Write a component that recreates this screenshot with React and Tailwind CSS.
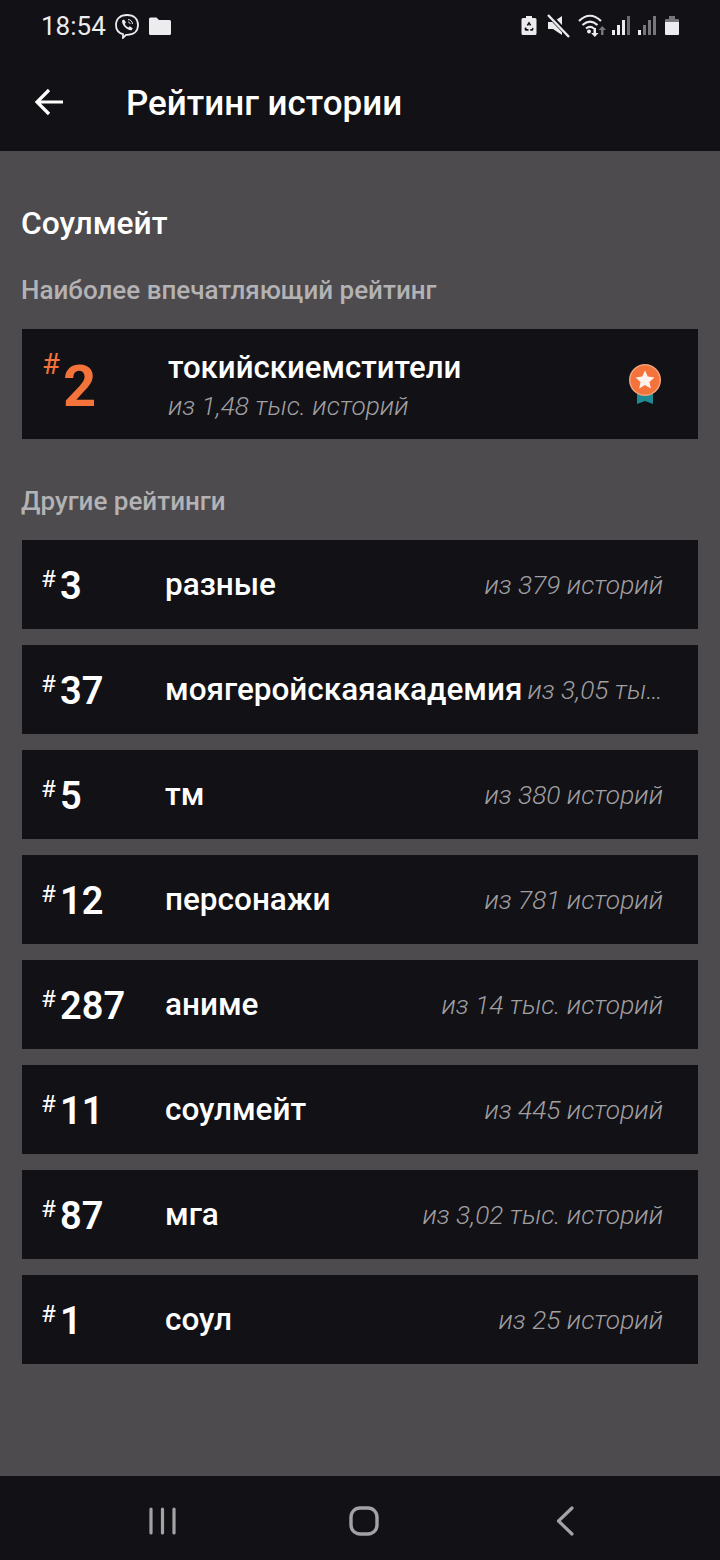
const rows = [
  { rank: "3", tag: "разные", total: "из 379 историй" },
  { rank: "37", tag: "моягеройскаяакадемия", total: "из 3,05 тыс. историй" },
  { rank: "5", tag: "тм", total: "из 380 историй" },
  { rank: "12", tag: "персонажи", total: "из 781 историй" },
  { rank: "287", tag: "аниме", total: "из 14 тыс. историй" },
  { rank: "11", tag: "соулмейт", total: "из 445 историй" },
  { rank: "87", tag: "мга", total: "из 3,02 тыс. историй" },
  { rank: "1", tag: "соул", total: "из 25 историй" },
];

function StatusIcons() {
  return (
    <div className="flex items-center">
      {/* battery saver */}
      <svg width="16" height="22" viewBox="0 0 16 22">
        <path d="M5 1h6v2h3a1.500 1.500 0 0 1 1.500 1.500v14A1.500 1.500 0 0 1 14 20H2a1.500 1.500 0 0 1-1.500-1.500v-14A1.500 1.500 0 0 1 2 3h3z" fill="#ececee" />
        <path d="M8 6.500l2.300 3.500-1.500.8L8 9.300l-.9 1.600-1.400-.8zM3.500 13l1.400-.8 1 1.700h1.600v1.800H4.800a1.200 1.200 0 0 1-1-1.800zM12.500 13l-.2 1.300a1.200 1.200 0 0 1-1.100 1.400H9.300V14h1.500l.6-1.200z" fill="#121115" />
      </svg>
      {/* mute */}
      <svg width="24" height="24" viewBox="0 0 24 24" className="ml-[10px]">
        <path d="M1 8h5l9-6v19l-9-6H1z" fill="#ececee" />
        <path d="M1 0l22 23" stroke="#121115" strokeWidth="5" />
        <path d="M1 1l21 22" stroke="#ececee" strokeWidth="2.400" />
      </svg>
      {/* wifi */}
      <svg width="30" height="24" viewBox="0 0 30 24" className="ml-[7px]">
        <path d="M1 7c7-7 15-7 22 0M4.500 11c5-4.500 10-4.500 15 0M8 14.500c3-2.500 5-2.500 8 0" fill="none" stroke="#ececee" strokeWidth="2.200" />
        <circle cx="11" cy="17.500" r="2" fill="#ececee" />
        <path d="M15.500 14h2.500v5h2.500l-3.700 4-3.700-4h2.400z" fill="#ececee" />
        <path d="M23 21h2.500v-5H28l-3.700-4-3.700 4H23z" fill="#77767a" />
      </svg>
      {/* signal 1 */}
      <svg width="20" height="22" viewBox="0 0 20 22" className="ml-[3px]">
        <rect x="1" y="15" width="3" height="5" fill="#ececee" />
        <rect x="6" y="10" width="3" height="10" fill="#ececee" />
        <rect x="11" y="5" width="3" height="15" fill="#ececee" />
        <rect x="16" y="1" width="3" height="19" fill="#6b6a6e" />
      </svg>
      {/* signal 2 */}
      <svg width="20" height="22" viewBox="0 0 20 22" className="ml-[6px]">
        <rect x="1" y="15" width="3" height="5" fill="#ececee" />
        <rect x="6" y="10" width="3" height="10" fill="#77767a" />
        <rect x="11" y="5" width="3" height="15" fill="#77767a" />
        <rect x="16" y="1" width="3" height="19" fill="#77767a" />
      </svg>
      {/* battery */}
      <svg width="16" height="22" viewBox="0 0 16 22" className="ml-[7px]">
        <path d="M5 1h6v3H5z" fill="#77767a" />
        <path d="M2 4h12a1 1 0 0 1 1 1v2H1V5a1 1 0 0 1 1-1z" fill="#77767a" />
        <path d="M1 7h14v12a1 1 0 0 1-1 1H2a1 1 0 0 1-1-1z" fill="#ececee" />
      </svg>
    </div>
  );
}

function Viber() {
  return (
    <svg width="26" height="26" viewBox="0 0 26 26">
      <path d="M13 2c6.500 0 11 3.500 11 10s-4.500 9.800-11 9.800l-1 0-3 3v-3.600C4.500 20 2 17 2 12 2 5.500 6.500 2 13 2z" fill="none" stroke="#ececee" strokeWidth="1.800" />
      <path d="M8 7.500l2-1 2 3-1.200 1.300c.6 1.800 1.800 3 3.600 3.600l1.300-1.200 3 2-1 2c-4.500.6-10-5-9.700-9.700z" fill="#ececee" />
      <path d="M14 6.500c2.600.2 4.300 2 4.500 4.500M14 9c1.200.1 2 .9 2.100 2" fill="none" stroke="#ececee" strokeWidth="1" />
    </svg>
  );
}

function Medal() {
  return (
    <svg width="34" height="42" viewBox="0 0 34 42">
      <path d="M9 26h16v15l-8-3-8 3z" fill="#1f8a94" />
      <circle cx="17" cy="17" r="16" fill="#f2a27c" />
      <circle cx="17" cy="17" r="14.500" fill="#f4733a" />
      <path d="M17 7.500l2.800 6.100 6.600.8-4.900 4.500 1.300 6.500-5.800-3.300-5.800 3.300 1.300-6.500-4.900-4.500 6.600-.8z" fill="#fdf3ec" />
    </svg>
  );
}

function Row({ rank, tag, total }) {
  return (
    <div className="flex h-[89px] items-center bg-[#121115] pl-[19px] pr-[35px]">
      <div className="flex w-[124px] shrink-0 items-start text-white">
        <span className="mt-[2px] w-[19px] text-[24px] leading-[28px]">#</span>
        <span className="mt-[2px] text-[38px] font-semibold leading-[42px]">{rank}</span>
      </div>
      <span className="shrink-0 text-[31.500px] font-medium leading-[36px] text-white">{tag}</span>
      <span className="ml-auto min-w-0 truncate pl-[5px] text-[26.300px] font-light italic leading-[32px] text-[#a09fa2]">{total}</span>
    </div>
  );
}

export default function App() {
  return (
    <div className="flex h-[1560px] w-[720px] flex-col overflow-hidden bg-[#4d4b4e] font-['Roboto',sans-serif]">
      <header className="h-[151px] shrink-0 bg-[#121115]">
        <div className="flex h-[52px] items-center justify-between pl-[41px] pr-[40px]">
          <div className="flex items-center">
            <span className="text-[26px] leading-[32px] text-[#ececee]">18:54</span>
            <span className="ml-[8px] flex"><Viber /></span>
            <svg width="24" height="20" viewBox="0 0 24 20" className="ml-[8px]">
              <path d="M1 3a1.500 1.500 0 0 1 1.500-1.500h6L11 4h10.500A1.500 1.500 0 0 1 23 5.500v12a1.500 1.500 0 0 1-1.500 1.500h-19A1.500 1.500 0 0 1 1 17.500z" fill="#ececee" />
            </svg>
          </div>
          <StatusIcons />
        </div>
        <div className="flex h-[99px] items-center pl-[34px]">
          <svg width="30" height="30" viewBox="0 0 30 30">
            <path d="M29 15H3M15 3 3 15l12 12" fill="none" stroke="#fff" strokeWidth="3.200" />
          </svg>
          <h1 className="ml-[62px] mt-[4px] text-[35px] font-medium leading-[40px] text-white">Рейтинг истории</h1>
        </div>
      </header>

      <main className="flex-1 pl-[22px] pr-[22px] pt-[53px]">
        <h2 className="ml-[-1px] text-[31.800px] font-medium leading-[38px] text-white">Соулмейт</h2>
        <h3 className="ml-[-1px] mt-[32px] text-[26px] font-medium leading-[32px] text-[#b3b2b4]">Наиболее впечатляющий рейтинг</h3>

        <div className="mt-[23px] flex h-[110px] items-center bg-[#121115] pl-[20px] pr-[36px]">
          <div className="flex w-[126px] shrink-0 items-start text-[#f4733a]">
            <span className="mt-[-3px] w-[22px] text-[29px] leading-[32px]">#</span>
            <span className="mt-[3px] ml-[-1px] text-[58px] font-bold leading-[64px]">2</span>
          </div>
          <div className="min-w-0 flex-1">
            <div className="mt-[6px] text-[31.200px] font-medium leading-[38px] text-white">токийскиемстители</div>
            <div className="text-[26.300px] font-light italic leading-[38px] text-[#a09fa2]">из 1,48 тыс. историй</div>
          </div>
          <Medal />
        </div>

        <h3 className="ml-[-1px] mt-[46px] text-[26px] font-medium leading-[32px] text-[#b3b2b4]">Другие рейтинги</h3>

        <div className="mt-[23px] flex flex-col gap-[16px]">
          {rows.map((r) => (
            <Row key={r.tag} {...r} />
          ))}
        </div>
      </main>

      <nav className="flex h-[84px] shrink-0 items-center bg-[#121115] pt-[6px]">
        <div className="flex w-full items-center pl-[149px] pr-[145px]">
          <svg width="27" height="28" viewBox="0 0 27 28">
            <path d="M2 2v24M13.500 2v24M25 2v24" stroke="#a3a2a5" strokeWidth="3.200" strokeLinecap="round" />
          </svg>
          <svg width="30" height="30" viewBox="0 0 30 30" className="ml-[173px]">
            <rect x="2" y="2" width="26" height="26" rx="9" fill="none" stroke="#a3a2a5" strokeWidth="3.400" />
          </svg>
          <svg width="20" height="30" viewBox="0 0 20 30" className="ml-auto">
            <path d="M17 2 3.500 15 17 28" fill="none" stroke="#a3a2a5" strokeWidth="3.200" strokeLinecap="round" strokeLinejoin="round" />
          </svg>
        </div>
      </nav>
    </div>
  );
}
